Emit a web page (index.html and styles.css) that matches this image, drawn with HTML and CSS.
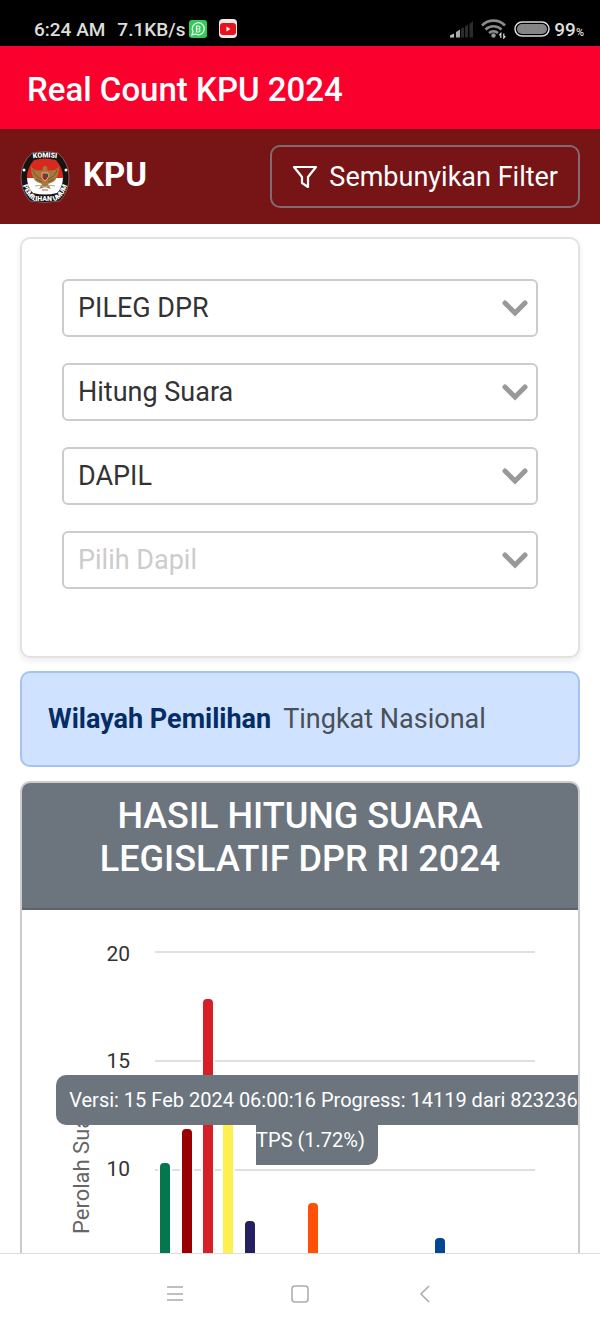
FILE: index.html
```html
<!DOCTYPE html>
<html lang="id">
<head>
  <meta charset="UTF-8">
  <meta name="viewport" content="width=device-width, initial-scale=1">
  <title>Real Count KPU 2024</title>
  <link rel="stylesheet" href="styles.css">
</head>
<body>

  <!-- Status bar -->
  <div class="status-bar">
    <span>6:24 AM</span>
    <span class="speed">7.1KB/s</span>
    <svg class="app-icon" viewBox="0 0 20 20" width="20" height="20">
      <rect x="1" y="1" width="18" height="18" rx="3" fill="#35c75a"/>
      <path d="M4 16l1-3.500a6 6 0 1 1 2.500 2.500z" fill="none" stroke="#d9ffe0" stroke-width="1.300"/>
      <path d="M8.500 7v6h2a1.500 1.500 0 0 0 0-3h-2 2a1.500 1.500 0 0 0 0-3z" fill="none" stroke="#e9ffee" stroke-width="1.200"/>
    </svg>
    <svg class="app-icon youtube" viewBox="0 0 20 20" width="20" height="20">
      <rect x="1" y="0" width="18" height="19" rx="4" fill="#f4e8e8"/>
      <rect x="2" y="4" width="16" height="12" rx="3" fill="#e8121c"/>
      <path d="M8.500 7.500l4 2.500-4 2.500z" fill="#fff"/>
    </svg>
    <div class="status-right">
      <svg viewBox="0 0 24 18" width="24" height="18">
        <path d="M0 17.500v-2l4-2v4z" fill="#bbb"/>
        <path d="M6 12l4-2.500v8H6z" fill="#aaa"/>
        <path d="M11 9l3-2v10.500h-3zM15 6.500l3-2v13h-3zM19.500 4L23 1v16.500h-3.500z" fill="#2c2c2c"/>
      </svg>
      <svg viewBox="0 0 26 20" width="26" height="20">
        <g fill="none" stroke="#8b8b8b" stroke-width="2.600">
          <path d="M1 6.500a16 16 0 0 1 23 0"/>
          <path d="M4.500 10.500a11.500 11.500 0 0 1 16 0"/>
          <path d="M8 14a7 7 0 0 1 9 0"/>
        </g>
        <circle cx="12.500" cy="16.500" r="2.200" fill="#999"/>
        <path d="M19.800 19v-4.500l-1.500 1.800M22.800 14.500V19l1.500-1.800" fill="none" stroke="#ddd" stroke-width="1.200"/>
      </svg>
      <svg viewBox="0 0 36 16" width="36" height="16">
        <rect x="1" y="1" width="34" height="14" rx="7" fill="#000" stroke="#ddd" stroke-width="1.500"/>
        <rect x="3" y="3" width="30" height="10" rx="5" fill="#858585"/>
      </svg>
      <span class="battery">99<small>%</small></span>
    </div>
  </div>

  <header class="app-bar">
    <h1>Real Count KPU 2024</h1>
  </header>

  <nav class="navbar">
    <a class="brand" href="#">
      <svg viewBox="0 0 50 52" width="50" height="52">
        <defs>
          <clipPath id="shield"><path d="M14 9Q25 6 36 9Q43 17 43 26Q43 36 37 42Q25 45 13 42Q7 36 7 26Q7 17 14 9z"/></clipPath>
          <path id="arcTop" d="M8 8Q25 5 42 8"/>
          <path id="arcBottom" d="M1 29Q6 48 16 50H34Q44 48 49 29"/>
        </defs>
        <path d="M12 2Q25-1 38 2Q49 12 49 26Q49 40 40 50Q25 53 10 50Q1 40 1 26Q1 12 12 2z" fill="#161313" stroke="#b08a88" stroke-width=".6"/>
        <g clip-path="url(#shield)">
          <rect width="50" height="27" fill="#d8291f"/>
          <rect y="27" width="50" height="25" fill="#fff"/>
        </g>
        <path d="M23 19Q14 21 11 15Q11 27 17 31L22 33L19 38L25 36L31 38L28 33L33 31Q39 27 39 15Q36 21 27 19Q28 15 25 15Q22 15 23 19z" fill="#a67a3c"/>
        <path d="M13 19Q15 26 22 28M16 28L22 31M37 19Q35 26 28 28M34 28L28 31" fill="none" stroke="#704a22" stroke-width=".8"/>
        <path d="M22 22h6v5l-3 3-3-3z" fill="#b51f1f" stroke="#eee" stroke-width=".6"/>
        <path d="M25 23h3v3h-3z" fill="#26613b"/>
        <path d="M15 35Q20 33 25 36Q30 33 35 35" fill="none" stroke="#aaa" stroke-width="1"/>
        <path d="M22 39h6" stroke="#b55" stroke-width="1"/>
        <circle cx="4" cy="19" r="1.500" fill="#fff"/>
        <circle cx="46" cy="19" r="1.500" fill="#fff"/>
        <text class="logo-text" text-anchor="middle"><textPath href="#arcTop" startOffset="50%">KOMISI</textPath></text>
        <text class="logo-text" text-anchor="middle"><textPath href="#arcBottom" startOffset="50%">PEMILIHAN UMUM</textPath></text>
      </svg>
      <span>KPU</span>
    </a>
    <button type="button" class="filter-btn">
      <svg viewBox="0 0 26 26" width="26" height="26">
        <path d="M2 3h22l-8 10v10l-6-4v-6z" fill="none" stroke="#fff" stroke-width="2.200" stroke-linejoin="round"/>
      </svg>
      Sembunyikan Filter
    </button>
  </nav>

  <main class="content">

    <form class="filter-card">
      <div class="select-box">
        <select aria-label="Jenis pemilihan"><option>PILEG DPR</option></select>
        <svg viewBox="0 0 24 16" width="24" height="16"><path d="M2 3l10 10L22 3"/></svg>
      </div>
      <div class="select-box">
        <select aria-label="Jenis data"><option>Hitung Suara</option></select>
        <svg viewBox="0 0 24 16" width="24" height="16"><path d="M2 3l10 10L22 3"/></svg>
      </div>
      <div class="select-box">
        <select aria-label="Wilayah"><option>DAPIL</option></select>
        <svg viewBox="0 0 24 16" width="24" height="16"><path d="M2 3l10 10L22 3"/></svg>
      </div>
      <div class="select-box">
        <select class="placeholder" aria-label="Dapil"><option>Pilih Dapil</option></select>
        <svg viewBox="0 0 24 16" width="24" height="16"><path d="M2 3l10 10L22 3"/></svg>
      </div>
    </form>

    <div class="region-info">
      <strong>Wilayah Pemilihan</strong>
      <span>Tingkat Nasional</span>
    </div>

    <section class="chart-card">
      <h2>HASIL HITUNG SUARA LEGISLATIF DPR RI 2024</h2>
      <div class="chart">
        <svg viewBox="0 0 556 400">
          <g class="grid">
            <path d="M133 42h380M133 151h380M133 260h380"/>
          </g>
          <g class="axis-label" text-anchor="end">
            <text x="108" y="51">20</text>
            <text x="108" y="158">15</text>
            <text x="108" y="266">10</text>
          </g>
          <text class="axis-title" transform="translate(67 324) rotate(-90)">Perolah Suara</text>
          <g class="bars">
            <rect x="137" y="252" width="12" height="300" rx="5" fill="#04784d"/>
            <rect x="159" y="218" width="12" height="300" rx="5" fill="#980002"/>
            <rect x="180" y="88" width="12" height="400" rx="5" fill="#d71f28"/>
            <rect x="200" y="190" width="12" height="300" rx="5" fill="#fff050"/>
            <rect x="222" y="310" width="12" height="200" rx="5" fill="#25205f"/>
            <rect x="285" y="292" width="12" height="200" rx="5" fill="#ff5008"/>
            <rect x="412" y="327" width="12" height="200" rx="5" fill="#034694"/>
          </g>
        </svg>
        <div class="progress-note">
          <span>Versi: 15 Feb 2024 06:00:16 Progress: 14119 dari 823236<br>TPS (1.72%)</span>
        </div>
      </div>
    </section>

  </main>

  <!-- Android navigation buttons -->
  <footer class="system-nav">
    <button type="button" aria-label="Menu">
      <svg viewBox="0 0 18 18" width="18" height="18"><path d="M1 2h16M1 9h16M1 15h16"/></svg>
    </button>
    <button type="button" aria-label="Home">
      <svg viewBox="0 0 18 18" width="18" height="18"><rect x="1" y="1" width="16" height="16" rx="3"/></svg>
    </button>
    <button type="button" aria-label="Back">
      <svg viewBox="0 0 18 18" width="18" height="18"><path d="M13 1L5 9l8 8"/></svg>
    </button>
  </footer>

</body>
</html>
```
FILE: styles.css
```css
* {
  box-sizing: border-box;
}

body {
  font-family: Roboto, sans-serif;
  font-size: 27px;
  background: #fff;
  color: #333;
  display: flex;
  flex-direction: column;
  height: 100vh;
  margin: 0;
}

svg {
  display: block;
  flex: none;
}

/* Status bar */
.status-bar {
  flex: none;
  height: 46px;
  padding: 12px 16px 0 34px;
  background: #000;
  color: #ddd;
  display: flex;
  align-items: center;
  font-size: 19px;
  font-weight: 500;
}

.speed {
  margin-left: 12px;
}

.app-icon {
  margin-left: 3px;
}

.youtube {
  margin-left: 10px;
}

.status-right {
  margin-left: auto;
  display: flex;
  align-items: center;
  gap: 7px;
}

.battery {
  margin-left: -3px;
}

.battery small {
  font-size: 11px;
}

/* Headers */
.app-bar {
  flex: none;
  height: 83px;
  padding: 4px 27px 0;
  background: #fa002c;
  color: #fff;
  display: flex;
  align-items: center;
}

.app-bar h1 {
  margin: 0;
  font-size: 33px;
  font-weight: 500;
}

.navbar {
  flex: none;
  padding: 16px 20px;
  background: #771416;
  display: flex;
  align-items: center;
  justify-content: space-between;
}

.brand {
  display: flex;
  align-items: center;
  gap: 13px;
  color: #fff;
  font-size: 33px;
  font-weight: 700;
  text-decoration: none;
}

.brand span {
  padding-bottom: 4px;
}

.logo-text {
  font-size: 7px;
  font-weight: 900;
  fill: #fff;
}

.filter-btn {
  height: 63px;
  padding: 0 20px;
  border: 2px solid #826b70;
  border-radius: 10px;
  background: none;
  color: #fff;
  font-family: inherit;
  font-size: 27px;
  display: flex;
  align-items: center;
  gap: 11px;
}

.content {
  flex: 1;
  min-height: 0;
  overflow: hidden;
  padding: 13px 20px 0;
}

/* Filter form */
.filter-card {
  margin-bottom: 13px;
  padding: 40px 40px 67px;
  border: 2px solid #e3e1e2;
  border-radius: 10px;
  box-shadow: 0 3px 6px rgba(0,0,0,0.08);
  display: flex;
  flex-direction: column;
  gap: 26px;
}

.select-box {
  position: relative;
}

.select-box select {
  appearance: none;
  width: 100%;
  height: 58px;
  padding: 0 50px 0 14px;
  border: 2px solid #ccc;
  border-radius: 6px;
  background: #fff;
  color: #333;
  font-family: inherit;
  font-size: 27px;
}

.select-box select.placeholder {
  color: #ccc;
}

.select-box svg {
  position: absolute;
  right: 11px;
  top: 21px;
  pointer-events: none;
  fill: none;
  stroke: #999;
  stroke-width: 5;
  stroke-linecap: round;
  overflow: visible;
}

.region-info {
  margin-bottom: 14px;
  padding: 27px 26px;
  border: 2px solid #a6c3ee;
  border-radius: 10px;
  background: #cfe2ff;
  display: flex;
  gap: 12px;
  line-height: 38px;
}

.region-info strong {
  color: #052c65;
}

.region-info span {
  color: #495057;
}

/* Chart */
.chart-card {
  border: 2px solid #ccc;
  border-radius: 10px;
  overflow: hidden;
}

.chart-card h2 {
  margin: 0;
  padding: 12px 60px 27px;
  border-bottom: 2px solid #5d636b;
  background: #6c757d;
  color: #fff;
  font-size: 36px;
  font-weight: 500;
  line-height: 43px;
  text-align: center;
}

.chart {
  position: relative;
}

.chart > svg {
  width: 100%;
}

.grid path {
  stroke: #e0e0e0;
  stroke-width: 2;
}

.axis-label {
  font-size: 21px;
  fill: #333;
}

.axis-title {
  font-size: 22px;
  fill: #666;
}

.bars rect {
  stroke: #fff;
  stroke-width: 2;
}

.progress-note {
  position: absolute;
  top: 170px;
  left: 34px;
  right: 0;
  text-align: center;
  white-space: nowrap;
  color: #fff;
  font-size: 20px;
  line-height: 40px;
}

.progress-note span {
  padding: 13px;
  border-radius: 10px;
  background: #6c757d;
}

/* System navigation */
.system-nav {
  flex: none;
  height: 80px;
  padding: 0 113px;
  border-top: 1px solid #ddd;
  background: #fff;
  display: flex;
  align-items: center;
  justify-content: space-around;
}

.system-nav button {
  padding: 10px;
  border: none;
  background: none;
}

.system-nav svg {
  fill: none;
  stroke: #aaa;
  stroke-width: 1.5;
}
```
